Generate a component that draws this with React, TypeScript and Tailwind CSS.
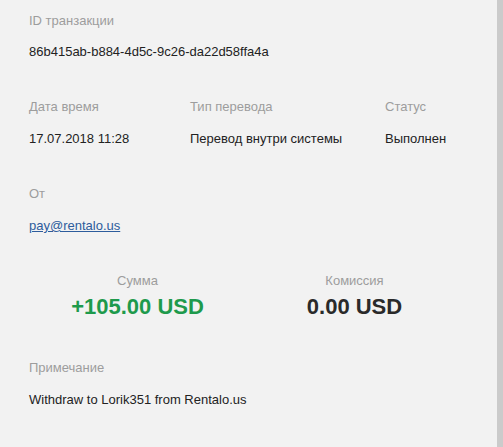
export default function App() {
  return (
    <div
      className="flex h-[447px] w-[503px] bg-[#f2f2f2] text-[13px] leading-[18px] text-[#222]"
      style={{ fontFamily: '"Liberation Sans", Arial, sans-serif' }}
    >
      <div className="flex flex-1 flex-col gap-[37px] pl-[29px] pt-[12px]">
        <div>
          <div className="text-[#9d9d9d]">ID транзакции</div>
          <div className="mt-[13px]">86b415ab-b884-4d5c-9c26-da22d58ffa4a</div>
        </div>
        <div className="flex">
          <div className="w-[161px]">
            <div className="text-[#9d9d9d]">Дата время</div>
            <div className="mt-[14px]">17.07.2018 11:28</div>
          </div>
          <div className="w-[195px]">
            <div className="text-[#9d9d9d]">Тип перевода</div>
            <div className="mt-[14px]">Перевод внутри системы</div>
          </div>
          <div>
            <div className="text-[#9d9d9d]">Статус</div>
            <div className="mt-[14px]">Выполнен</div>
          </div>
        </div>
        <div>
          <div className="text-[#9d9d9d]">От</div>
          <div className="mt-[14px]">
            <a href="#" className="text-[#2d5c9c] underline">
              pay@rentalo.us
            </a>
          </div>
        </div>
        <div className="grid grid-cols-[217px_217px] text-center">
          <div>
            <div className="text-[#9d9d9d]">Сумма</div>
            <div className="mt-[3px] text-[22px] font-bold leading-[28px] text-[#1e9a4c]">
              +105.00 USD
            </div>
          </div>
          <div>
            <div className="text-[#9d9d9d]">Комиссия</div>
            <div className="mt-[3px] text-[22px] font-bold leading-[28px] text-[#2a2a2a]">
              0.00 USD
            </div>
          </div>
        </div>
        <div className="mt-[1px]">
          <div className="text-[#9d9d9d]">Примечание</div>
          <div className="mt-[14px]">Withdraw to Lorik351 from Rentalo.us</div>
        </div>
      </div>
      <div className="w-[6px] bg-[#cbcbcb]" />
    </div>
  );
}
